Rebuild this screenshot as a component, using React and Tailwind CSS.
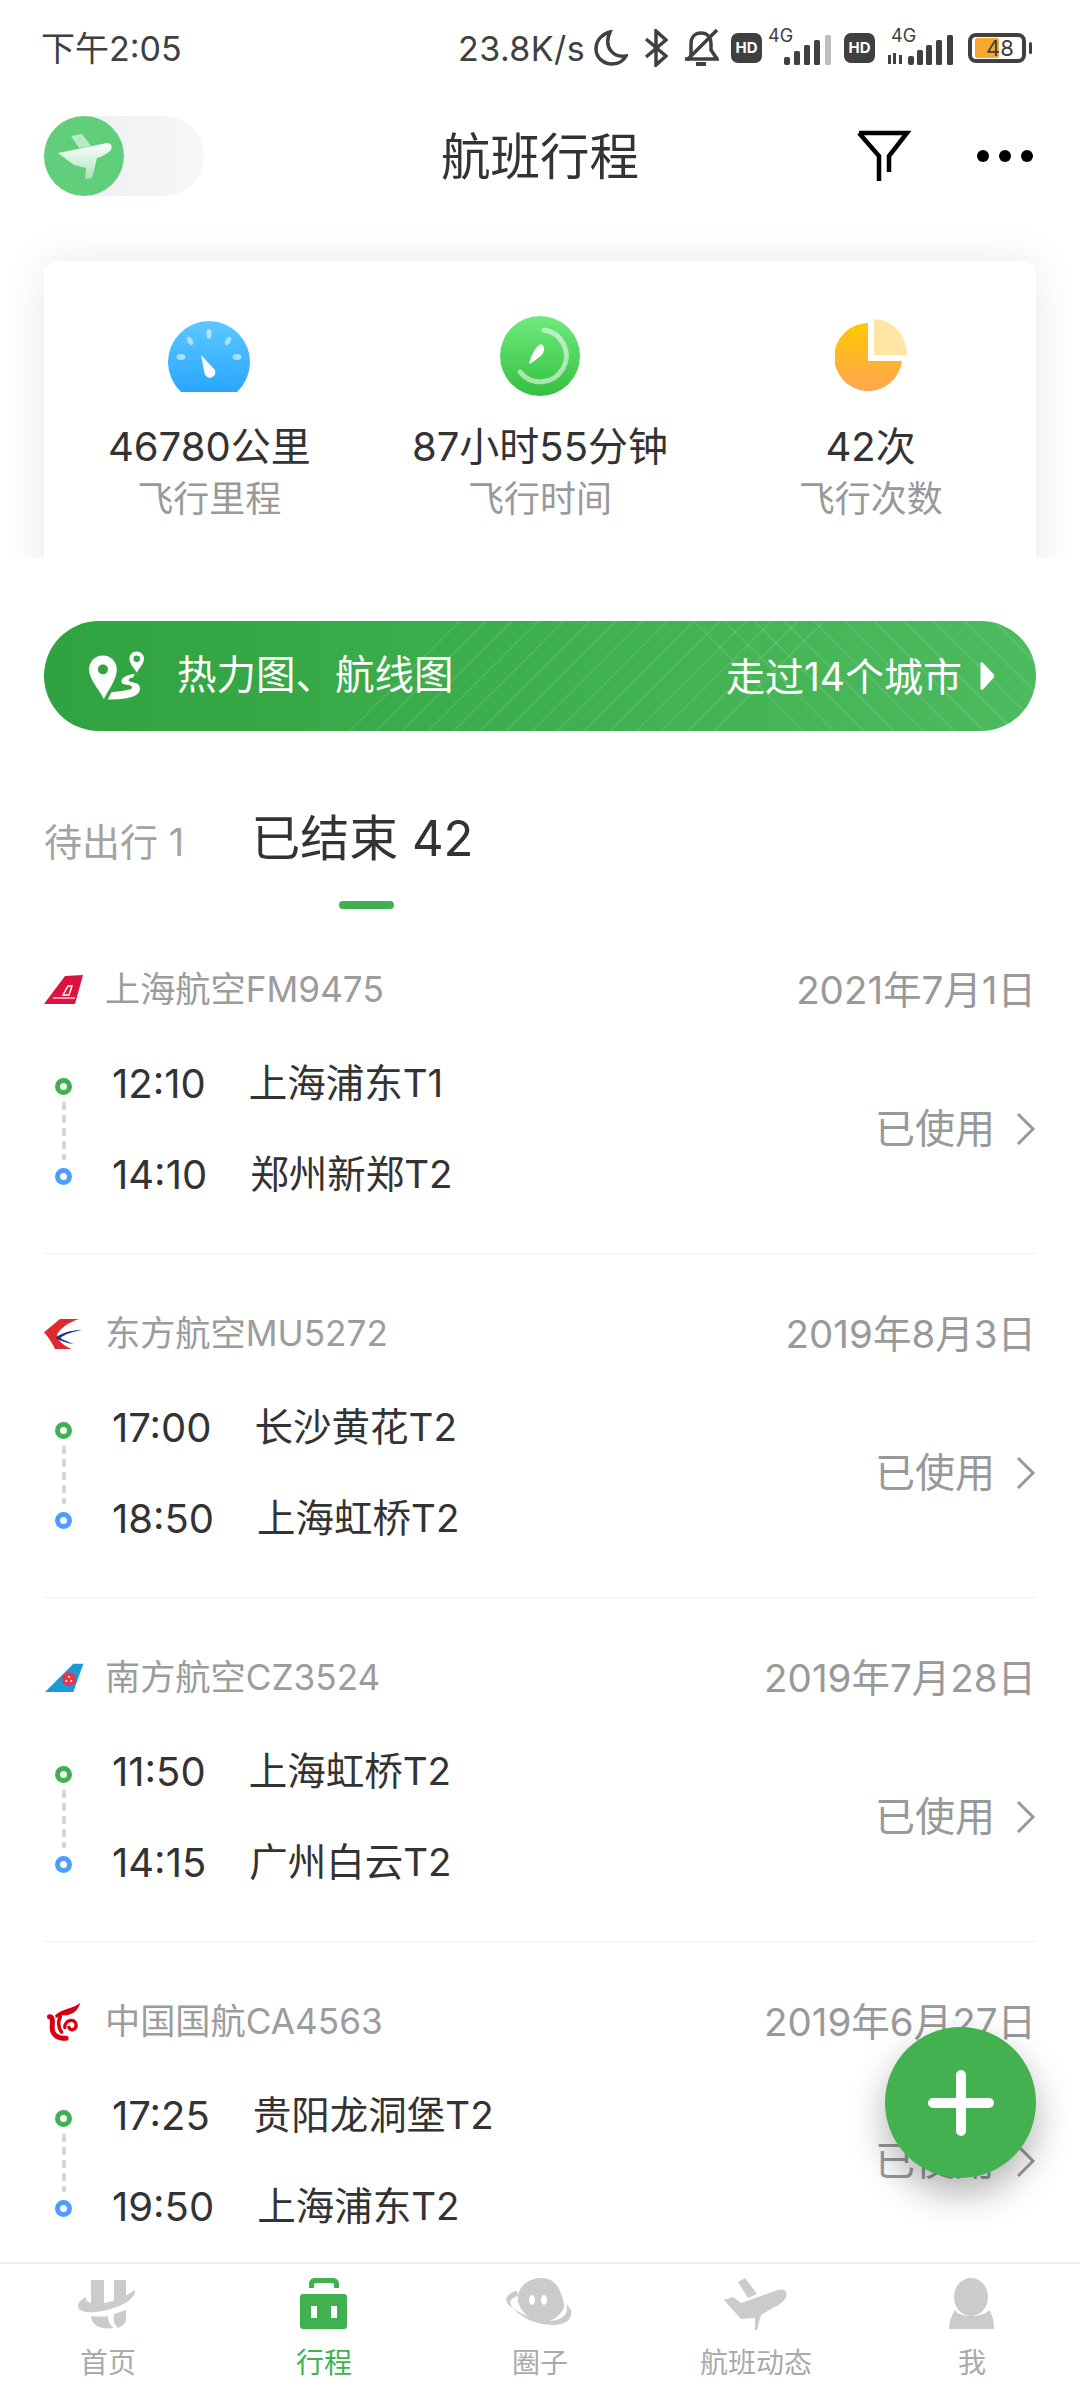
const flights = [
  { logo: 'fm', airline: '上海航空FM9475', date: '2021年7月1日', depTime: '12:10', dep: '上海浦东T1', arrTime: '14:10', arr: '郑州新郑T2' },
  { logo: 'mu', airline: '东方航空MU5272', date: '2019年8月3日', depTime: '17:00', dep: '长沙黄花T2', arrTime: '18:50', arr: '上海虹桥T2' },
  { logo: 'cz', airline: '南方航空CZ3524', date: '2019年7月28日', depTime: '11:50', dep: '上海虹桥T2', arrTime: '14:15', arr: '广州白云T2' },
  { logo: 'ca', airline: '中国国航CA4563', date: '2019年6月27日', depTime: '17:25', dep: '贵阳龙洞堡T2', arrTime: '19:50', arr: '上海浦东T2' },
];

const stats = [
  { icon: 'gauge', value: '46780公里', label: '飞行里程' },
  { icon: 'clock', value: '87小时55分钟', label: '飞行时间' },
  { icon: 'pie', value: '42次', label: '飞行次数' },
];

function AirlineLogo({ name }) {
  if (name === 'fm') {
    return (
      <svg viewBox="0 0 40 30" className="h-[30px] w-[40px]">
        <polygon points="0,29 21,1 39,0 31,29" fill="#dc1240" />
        <polygon points="19,20 24,11 28,11 25,20" fill="none" stroke="#fff" strokeWidth="1.5" />
        <line x1="9" y1="23" x2="31" y2="23" stroke="#fff" strokeWidth="1.2" />
      </svg>
    );
  }
  if (name === 'mu') {
    return (
      <svg viewBox="42 28 120 90" className="h-[30px] w-[40px]">
        <path d="M42 68 L90 28 H148 C120 36 98 50 82 72 C78 88 98 106 125 118 H75 C66 100 56 84 42 68Z" fill="#e02a2f" />
        <path d="M157 60 C120 62 92 70 76 85 C90 94 110 100 132 104 C112 94 94 90 92 84 C102 74 130 66 157 60Z" fill="#1c3a8c" />
      </svg>
    );
  }
  if (name === 'cz') {
    return (
      <svg viewBox="130 70 120 90" className="h-[30px] w-[40px]">
        <polygon points="133,157 218,72 248,72 218,157" fill="#1a9ad6" />
        <circle cx="205" cy="118" r="21" fill="#e8344f" />
        <circle cx="197" cy="124" r="3" fill="#fff" />
        <circle cx="212" cy="124" r="3" fill="#fff" />
        <circle cx="205" cy="112" r="3" fill="#fff" />
      </svg>
    );
  }
  return (
    <svg viewBox="130 1088 110 120" className="h-[40px] w-[37px]">
      <g fill="none" stroke="#d7000f" strokeLinecap="round">
        <path d="M146 1132 C158 1132 154 1150 154 1165 C154 1188 172 1198 196 1197" strokeWidth="15" />
        <path d="M178 1132 C172 1146 172 1165 182 1178" strokeWidth="11" />
        <path d="M192 1165 C190 1140 226 1135 226 1158 C226 1172 208 1176 204 1164" strokeWidth="10" />
      </g>
      <path d="M163 1128 C185 1106 215 1110 238 1090 C232 1115 212 1128 190 1128 C180 1128 172 1131 165 1137Z" fill="#d7000f" />
    </svg>
  );
}

function StatIcon({ name }) {
  if (name === 'gauge') {
    return (
      <svg viewBox="0 0 82 72" className="h-[72px] w-[82px]">
        <defs>
          <linearGradient id="gaugeFill" x1="0" y1="0" x2="0" y2="1">
            <stop offset="0" stopColor="#5cc8ff" />
            <stop offset="1" stopColor="#2aa6ff" />
          </linearGradient>
        </defs>
        <path d="M13 72 A41 41 0 1 1 69 72 Z" fill="url(#gaugeFill)" />
        <g fill="#fff" opacity="0.55">
          <ellipse cx="41" cy="14" rx="2.5" ry="5" />
          <ellipse cx="22" cy="21" rx="2.5" ry="4.5" transform="rotate(-30 22 21)" />
          <ellipse cx="60" cy="21" rx="2.5" ry="4.5" transform="rotate(30 60 21)" />
          <ellipse cx="13" cy="37" rx="4.5" ry="3" />
          <ellipse cx="69" cy="37" rx="4.5" ry="3" />
        </g>
        <path d="M33 35 L47 50 A5.5 5.5 0 1 1 36.5 53 Z" fill="#fff" />
      </svg>
    );
  }
  if (name === 'clock') {
    return (
      <svg viewBox="0 0 80 80" className="h-[80px] w-[80px]">
        <defs>
          <linearGradient id="clockFill" x1="0" y1="0" x2="0" y2="1">
            <stop offset="0" stopColor="#70ea7e" />
            <stop offset="1" stopColor="#33c040" />
          </linearGradient>
        </defs>
        <circle cx="40" cy="40" r="40" fill="url(#clockFill)" />
        <path d="M44 14 A26 26 0 1 1 20 56" fill="none" stroke="#fff" strokeOpacity="0.55" strokeWidth="5" strokeLinecap="round" />
        <path d="M29 48 C31 39 36 30 41 28 C46 30 45 38 38 42 C35 44 32 47 29 48Z" fill="#fff" />
      </svg>
    );
  }
  return (
    <svg viewBox="0 0 72 74" className="h-[74px] w-[72px]">
      <defs>
        <linearGradient id="pieFill" x1="0" y1="0" x2="0" y2="1">
          <stop offset="0" stopColor="#ffc800" />
          <stop offset="1" stopColor="#ffa552" />
        </linearGradient>
      </defs>
      <path d="M33 4 V42 H67 A34 34 0 1 1 33 4Z" fill="url(#pieFill)" />
      <path d="M39 0 A33 36 0 0 1 72 36 H39Z" fill="#ffe5a6" />
    </svg>
  );
}

function TabIcon({ name, color }) {
  if (name === 'home') {
    return (
      <svg viewBox="0 0 60 52" className="h-[52px] w-[60px]" fill={color}>
        <path d="M13 2 H26 V26 L13 27Z" />
        <path d="M36 2 H48 V16 C48 20 42 24 36 25Z" />
        <path d="M0 28 C0 24 4 21 8 19 C6 28 30 30 57 12 C58 26 24 36 8 34 C3 33 0 31 0 28Z" />
        <path d="M13 38 C20 39 26 39 30 38 C30 44 33 48 36 50 C24 52 13 48 13 38Z" />
        <path d="M36 36 L48 32 V40 C48 46 44 48 40 50 C36 46 35 42 36 36Z" />
      </svg>
    );
  }
  if (name === 'trip') {
    return (
      <svg viewBox="0 0 48 52" className="h-[52px] w-[48px]" fill={color}>
        <path d="M9 10 V6 C9 2 12 0 15 0 H33 C36 0 39 2 39 6 V10 H34 V7 C34 6 33 5 32 5 H16 C15 5 14 6 14 7 V10Z" />
        <rect x="0" y="16" width="47" height="35" rx="3" />
        <rect x="11" y="28" width="6" height="12" fill="#fff" />
        <rect x="31" y="28" width="6" height="12" fill="#fff" />
      </svg>
    );
  }
  if (name === 'circle') {
    return (
      <svg viewBox="0 0 68 48" className="mb-[4px] h-[48px] w-[68px]" fill={color}>
        <path d="M12 18 C14 6 24 0 36 0 C48 0 55 10 58 26 C60 32 48 44 38 44 C26 44 16 36 12 24Z" />
        <path d="M11 13 L12 18 C6 20 3 22 5 27 C10 36 26 47 48 47 C58 47 67 42 65 32 L60 25 C63 32 60 40 50 42 C34 46 12 36 2 26 C-3 20 4 14 11 13Z" />
        <ellipse cx="26" cy="22" rx="3" ry="5" fill="#fff" />
        <ellipse cx="38" cy="22" rx="3" ry="5" fill="#fff" />
      </svg>
    );
  }
  if (name === 'flight') {
    return (
      <svg viewBox="0 0 64 52" className="h-[52px] w-[64px]" fill={color}>
        <polygon points="14,4 21,0 33,16 24,20" />
        <path d="M0 22 L9 19 L17 25 L54 12 C60 10 64 14 62 19 C60 23 56 27 50 29 L37 37 L33 52 L31 53 V40 L17 41Z" />
      </svg>
    );
  }
  return (
    <svg viewBox="0 0 46 52" className="h-[52px] w-[46px]" fill={color}>
      <ellipse cx="22" cy="19" rx="17" ry="19" />
      <path d="M6 32 C10 40 34 40 40 32 C44 38 45 44 45 51 H0 C0 44 2 38 6 32Z" />
    </svg>
  );
}

function HdBadge({ className }) {
  return (
    <div className={`flex h-[30px] w-[31px] items-center justify-center rounded-[7px] bg-[#404040] text-[15px] font-bold text-white ${className}`}>
      HD
    </div>
  );
}

function StatusBar() {
  return (
    <div className="flex h-[96px] items-center justify-between pl-[41px] pr-[48px] text-[#404040]">
      <span className="text-[34px]">下午2:05</span>
      <div className="flex items-center">
        <span className="text-[34px] tracking-[0.4px]">23.8K/s</span>
        <svg viewBox="0 0 34 36" className="ml-[9px] h-[36px] w-[34px]" fill="none" stroke="#404040" strokeWidth="3.5">
          <path d="M16 2 C6 5 2 12 2 19 C2 28 10 34 18 34 C25 34 30 30 32 26 C20 28 9 18 16 2Z" />
        </svg>
        <svg viewBox="0 0 24 38" className="ml-[16px] h-[38px] w-[24px]" fill="none" stroke="#404040" strokeWidth="3.5">
          <path d="M2 10 L22 27 L12 36 V2 L22 11 L2 28" />
        </svg>
        <svg viewBox="0 0 36 40" className="ml-[15px] h-[40px] w-[36px]" fill="none" stroke="#404040" strokeWidth="3.5">
          <path d="M8 28 V16 C8 9 12 5 18 5 C24 5 28 9 28 16 V22 L34 31 H2" />
          <path d="M34 2 L4 32" />
          <path d="M13 36 H23" strokeWidth="4" />
        </svg>
        <HdBadge className="ml-[12px]" />
        <div className="relative ml-[6px] h-[34px] w-[64px]">
          <span className="absolute left-0 top-[-6px] text-[18px] leading-[22px]">4G</span>
          <svg viewBox="0 0 48 30" className="absolute bottom-0 right-0 h-[30px] w-[48px]" fill="#404040">
            <rect x="0" y="22" width="6" height="8" rx="2" />
            <rect x="10" y="16" width="6" height="14" rx="1.5" />
            <rect x="20" y="10" width="6" height="20" rx="1.5" />
            <rect x="30" y="5" width="6" height="25" rx="1.5" />
            <rect x="41" y="0" width="6" height="30" rx="1.5" fill="#bdbdbd" />
          </svg>
        </div>
        <HdBadge className="ml-[12px]" />
        <div className="relative ml-[13px] h-[34px] w-[66px]">
          <span className="absolute left-[3px] top-[-6px] text-[18px] leading-[22px]">4G</span>
          <svg viewBox="0 0 66 30" className="absolute bottom-0 right-0 h-[30px] w-[66px]" fill="#404040">
            <rect x="0" y="20" width="3" height="9" />
            <rect x="5" y="18" width="3" height="11" />
            <rect x="11" y="20" width="3" height="9" />
            <rect x="20" y="21" width="6" height="9" rx="2" />
            <rect x="29" y="15" width="6" height="15" rx="1.5" />
            <rect x="38" y="10" width="6" height="20" rx="1.5" />
            <rect x="48" y="5" width="6" height="25" rx="1.5" />
            <rect x="59" y="0" width="6" height="30" rx="1.5" />
          </svg>
        </div>
        <div className="relative ml-[14px] flex h-[30px] w-[58px] items-center rounded-[8px] border-[4px] border-[#404040]">
          <div className="ml-[3px] h-[20px] w-[24px] rounded-[2px] bg-[#f5a92f]" />
          <span className="absolute left-[14px] text-[22px] leading-[22px]">48</span>
        </div>
        <div className="ml-[3px] h-[12px] w-[3px] rounded-[2px] bg-[#404040]" />
      </div>
    </div>
  );
}

function Header() {
  return (
    <div className="flex h-[120px] items-center pl-[44px] pr-[44px]">
      <div className="relative h-[80px] w-[160px] rounded-full bg-gradient-to-r from-[#eceef0] to-[#f6f7f8]">
        <svg viewBox="0 0 80 80" className="absolute left-0 top-0 h-[80px] w-[80px]">
          <defs>
            <linearGradient id="planeFill" x1="0" y1="0" x2="0" y2="1">
              <stop offset="0" stopColor="#ffffff" />
              <stop offset="1" stopColor="#ffffff" stopOpacity="0.45" />
            </linearGradient>
          </defs>
          <circle cx="40" cy="40" r="40" fill="#61ce7c" />
          <polygon points="27,20 38,18 47,30 35,32" fill="#fff" fillOpacity="0.55" />
          <path d="M14 37 L63 27 C68 27 69 32 66 35 C62 38 58 41 53 42 L48 62 L41 63 L42 52 L30 49Z" fill="url(#planeFill)" />
        </svg>
      </div>
      <h1 className="ml-[237px] mt-[4px] text-[49.5px] leading-none font-normal text-[#333]">航班行程</h1>
      <svg viewBox="0 0 56 54" className="ml-[216px] h-[54px] w-[56px]" fill="none" stroke="#000" strokeWidth="4.5">
        <path d="M4 4 H52 L34 27 V43 M4 4 L24 27 V52" />
      </svg>
      <div className="ml-auto flex gap-[10px] pr-[3px]">
        <span className="h-[12px] w-[12px] rounded-full bg-black" />
        <span className="h-[12px] w-[12px] rounded-full bg-black" />
        <span className="h-[12px] w-[12px] rounded-full bg-black" />
      </div>
    </div>
  );
}

function StatsCard() {
  return (
    <div className="h-[342px] overflow-hidden px-[44px] pt-[45px]">
      <div className="grid h-[340px] grid-cols-3 rounded-t-[14px] bg-white pt-[55px] shadow-[0_0_44px_rgba(0,0,0,0.09)]">
        {stats.map((s) => (
          <div key={s.label} className="flex flex-col items-center">
            <div className="flex h-[80px] items-center">
              <StatIcon name={s.icon} />
            </div>
            <p className="mt-[26px] text-[40px] leading-[50px] text-[#333]">{s.value}</p>
            <p className="mt-[2px] text-[36px] leading-[50px] text-[#999]">{s.label}</p>
          </div>
        ))}
      </div>
    </div>
  );
}

function RouteBanner() {
  const left = Array.from({ length: 15 }, (_, i) => 350 + i * 26);
  const right = Array.from({ length: 14 }, (_, i) => 650 + i * 30);
  return (
    <div className="relative mx-[44px] mt-[63px] flex h-[110px] items-center overflow-hidden rounded-full bg-gradient-to-r from-[#2fa33f] to-[#4cbb5e] text-white">
      <svg viewBox="0 0 992 110" className="absolute inset-0 h-[110px] w-[992px]" fill="none" stroke="#fff" strokeOpacity="0.09" strokeWidth="2">
        {left.map((x) => (
          <line key={x} x1={x - 44} y1="110" x2={x + 66} y2="0" />
        ))}
        {right.map((x) => (
          <line key={x} x1={x} y1="0" x2={x + 110} y2="110" />
        ))}
      </svg>
      <svg viewBox="85 80 175 150" className="relative ml-[44px] h-[50px] w-[58px]" fill="#fff">
        <path fillRule="evenodd" d="M130 93 C154 93 172 112 172 135 C172 165 148 195 133 225 C118 195 88 165 88 135 C88 112 106 93 130 93Z M130 120 A15 15 0 1 0 130.1 150 A15 15 0 1 0 130 120Z" />
        <path fillRule="evenodd" d="M232 81 C245 81 254 91 254 103 C254 118 240 130 232 145 C224 130 210 118 210 103 C210 91 219 81 232 81Z M232 93 A10 10 0 1 0 232.1 113 A10 10 0 1 0 232 93Z" />
        <path d="M226 148 C200 152 186 160 186 172 C186 186 218 176 218 190 C218 198 190 200 156 204 L144 226 C190 226 242 222 242 192 C242 170 208 178 208 168 C208 162 218 160 222 159Z" />
      </svg>
      <span className="relative ml-[31px] text-[39.5px] leading-none">热力图、航线图</span>
      <span className="relative ml-auto text-[39px] leading-none">走过14个城市</span>
      <svg viewBox="0 0 16 32" className="relative ml-[17px] mr-[40px] h-[28px] w-[17px]" fill="#fff">
        <path d="M0 2 C0 0 2 0 3 1 L15 14 C16 15 16 17 15 18 L3 31 C2 32 0 32 0 30Z" />
      </svg>
    </div>
  );
}

function Tabs() {
  return (
    <div className="relative h-[179px] px-[44px]">
      <div className="flex items-baseline pt-[83px]">
        <span className="text-[38px] leading-[50px] text-[#a3a3a3]">待出行 1</span>
        <span className="ml-[67px] text-[49px] leading-[50px] text-[#333]">已结束 42</span>
      </div>
      <div className="ml-[295px] mt-[34px] h-[8px] w-[55px] rounded-full bg-[#3fb04f]" />
    </div>
  );
}

function FlightRow({ flight }) {
  return (
    <div className="mx-[44px] h-[344px] border-b-[1px] border-[#eeeeee] pt-[60px]">
      <div className="flex h-[40px] items-center justify-between">
        <div className="flex items-center">
          <div className="flex w-[61px] items-center">
            <AirlineLogo name={flight.logo} />
          </div>
          <span className="text-[35.2px] leading-none text-[#9c9c9c]">{flight.airline}</span>
        </div>
        <span className="text-[38.5px] leading-none text-[#999]">{flight.date}</span>
      </div>
      <div className="mt-[28px] flex h-[182px] items-center justify-between">
        <div className="flex h-full">
          <div className="ml-[11px] flex w-[17px] flex-col items-center pt-[40px]">
            <div className="h-[17px] w-[17px] rounded-full border-[5px] border-[#3fb04f]" />
            <div className="mt-[7px] h-[58px] w-[4px] bg-[repeating-linear-gradient(to_bottom,#d6d6d6_0,#d6d6d6_8px,transparent_8px,transparent_13px)]" />
            <div className="mt-[8px] h-[17px] w-[17px] rounded-full border-[5px] border-[#4c9dff]" />
          </div>
          <div className="ml-[40px] flex flex-col text-[#333]">
            <div className="flex h-[91px] items-center">
              <span className="text-[40px]">{flight.depTime}</span>
              <span className="ml-[43px] text-[38.5px]">{flight.dep}</span>
            </div>
            <div className="flex h-[91px] items-center">
              <span className="text-[40px]">{flight.arrTime}</span>
              <span className="ml-[43px] text-[38.5px]">{flight.arr}</span>
            </div>
          </div>
        </div>
        <div className="flex items-center">
          <span className="text-[40px] leading-none text-[#999]">已使用</span>
          <svg viewBox="0 0 20 36" className="ml-[21px] h-[36px] w-[20px]" fill="none" stroke="#999" strokeWidth="3">
            <path d="M2 3 L17 18 L2 33" />
          </svg>
        </div>
      </div>
    </div>
  );
}

function TabBar() {
  const tabs = [
    { id: 'home', label: '首页' },
    { id: 'trip', label: '行程', active: true },
    { id: 'circle', label: '圈子' },
    { id: 'flight', label: '航班动态' },
    { id: 'me', label: '我' },
  ];
  return (
    <div className="grid h-[138px] shrink-0 grid-cols-5 border-t-[2px] border-[#eeeeee] bg-white pt-[14px]">
      {tabs.map((t) => (
        <div key={t.id} className="flex flex-col items-center">
          <div className="flex h-[54px] items-start justify-center">
            <TabIcon name={t.id} color={t.active ? '#41b14f' : '#cbcbcb'} />
          </div>
          <span className={`mt-[14px] text-[28px] leading-[34px] ${t.active ? 'text-[#41b14f]' : 'text-[#aaaaaa]'}`}>
            {t.label}
          </span>
        </div>
      ))}
    </div>
  );
}

export default function App() {
  return (
    <div className="relative flex h-[2400px] w-[1080px] flex-col overflow-hidden bg-white [font-family:Inter,'Noto_Sans_CJK_SC',sans-serif]">
      <StatusBar />
      <Header />
      <StatsCard />
      <RouteBanner />
      <Tabs />
      <div className="min-h-0 flex-1 overflow-hidden">
        {flights.map((f) => (
          <FlightRow key={f.airline} flight={f} />
        ))}
      </div>
      <TabBar />
      <div className="absolute left-[885px] top-[2027px] flex h-[151px] w-[151px] items-center justify-center rounded-full bg-[#43b14f] shadow-[0_16px_36px_rgba(0,0,0,0.3)]">
        <svg viewBox="0 0 66 66" className="h-[66px] w-[66px]" stroke="#fff" strokeWidth="10" strokeLinecap="round">
          <path d="M33 5 V61 M5 33 H61" />
        </svg>
      </div>
    </div>
  );
}
